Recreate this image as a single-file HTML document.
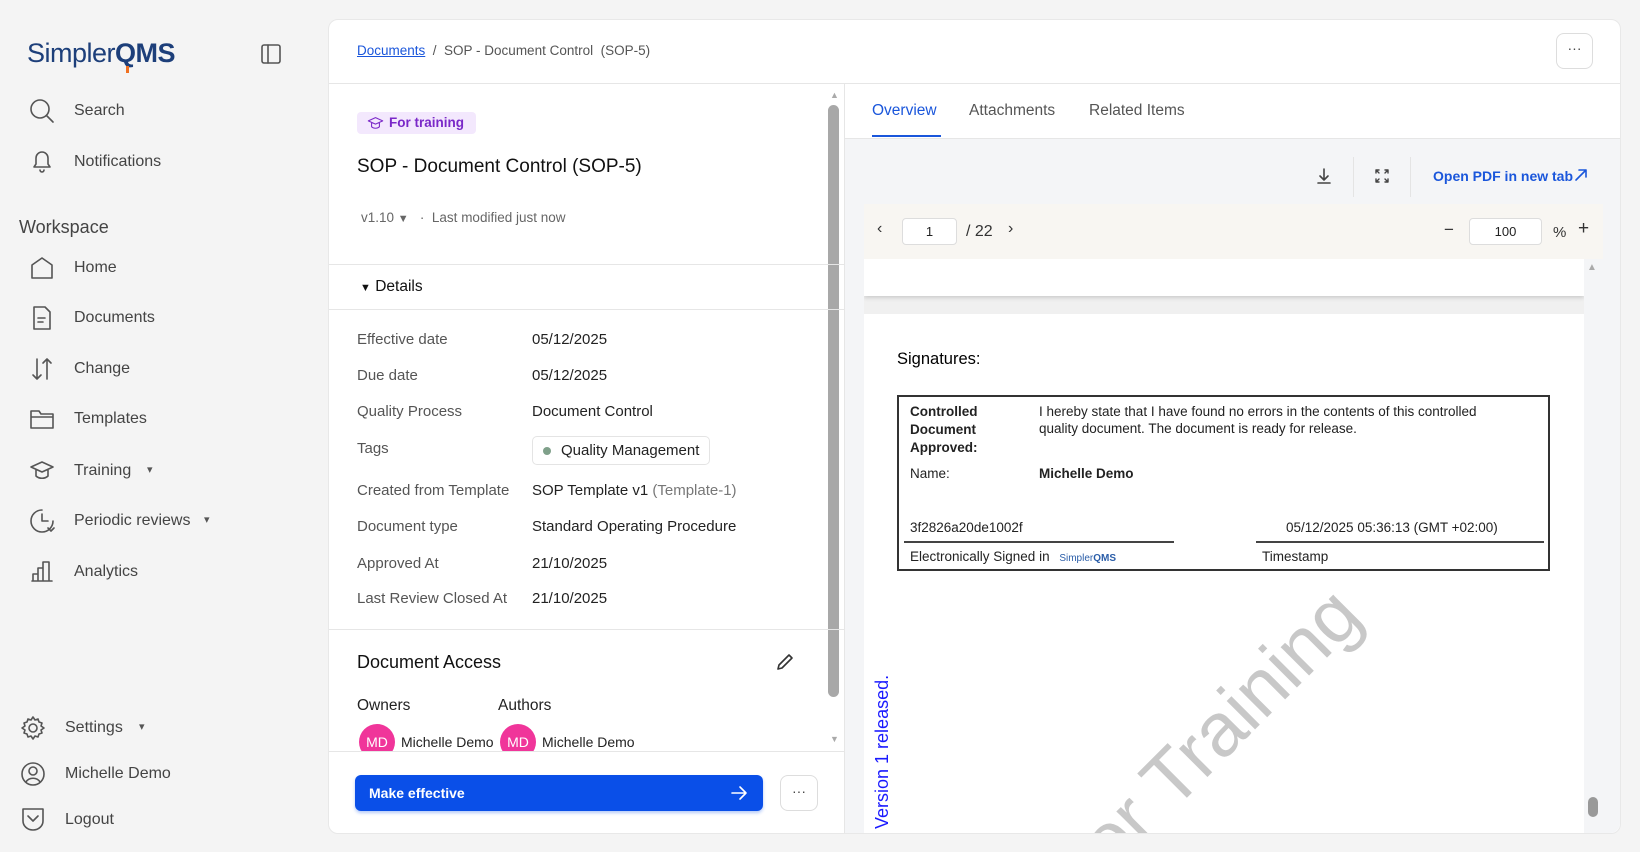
<!DOCTYPE html>
<html style="overflow:hidden"><head><meta charset="utf-8"><style>
*{box-sizing:border-box;margin:0;padding:0}
html,body{width:1640px;height:852px;overflow:hidden}
body{background:#f4f4f4;font-family:"Liberation Sans",sans-serif;position:relative;color:#222}
.a{position:absolute;white-space:nowrap}
.nav{font-size:16px;color:#444}
.ic{position:absolute;width:26px;height:26px;fill:none;stroke:#555;stroke-width:1.6;stroke-linecap:round;stroke-linejoin:round}
.lbl{font-size:15px;color:#555}
.val{font-size:15px;color:#222}
.hr{position:absolute;height:1px;background:#e6e6e6}
</style></head><body>
<!-- sidebar -->
<div class="a" style="left:27px;top:38px;font-size:27px;color:#1d3f7a;letter-spacing:-0.5px">Simpler<b style="color:#1d3f7a">QMS</b></div>
<div class="a" style="left:126px;top:66px;width:3px;height:7px;background:#f07020"></div>
<svg class="ic" style="left:260px;top:43px;width:22px;height:22px" viewBox="0 0 22 22"><rect x="2" y="2" width="18" height="18" rx="2"/><line x1="8" y1="2" x2="8" y2="20"/></svg>

<svg class="ic" style="left:29px;top:98px" viewBox="0 0 26 26"><circle cx="11" cy="11" r="9"/><line x1="18" y1="18" x2="24" y2="24"/></svg>
<div class="a nav" style="left:74px;top:102px">Search</div>
<svg class="ic" style="left:29px;top:148px" viewBox="0 0 26 26"><path d="M5 19h16l-2-3v-6a6 6 0 0 0-12 0v6z"/><path d="M11 22a2 2 0 0 0 4 0"/></svg>
<div class="a nav" style="left:74px;top:153px">Notifications</div>
<div class="a" style="left:19px;top:217px;font-size:18px;color:#444">Workspace</div>
<svg class="ic" style="left:29px;top:255px" viewBox="0 0 26 26"><path d="M3 10L13 3l10 7v13H3z"/></svg>
<div class="a nav" style="left:74px;top:259px">Home</div>
<svg class="ic" style="left:29px;top:305px" viewBox="0 0 26 26"><path d="M5 2h11l5 5v17H5z"/><line x1="9" y1="13" x2="16" y2="13"/><line x1="9" y1="17" x2="14" y2="17"/></svg>
<div class="a nav" style="left:74px;top:309px">Documents</div>
<svg class="ic" style="left:29px;top:356px" viewBox="0 0 26 26"><path d="M8 3v20M4 19l4 4 4-4M18 23V3M14 7l4-4 4 4"/></svg>
<div class="a nav" style="left:74px;top:360px">Change</div>
<svg class="ic" style="left:29px;top:406px" viewBox="0 0 26 26"><path d="M2 5h8l2 3h12v14H2z M2 11h22"/></svg>
<div class="a nav" style="left:74px;top:410px">Templates</div>
<svg class="ic" style="left:29px;top:458px" viewBox="0 0 26 26"><path d="M2 9l11-5 11 5-11 5z M7 12v6c3 3 9 3 12 0v-6"/></svg>
<div class="a nav" style="left:74px;top:462px">Training</div>
<div class="a" style="left:147px;top:463px;font-size:11px;color:#555">▾</div>
<svg class="ic" style="left:29px;top:508px" viewBox="0 0 26 26"><path d="M13 2a11 11 0 1 0 11 11"/><path d="M13 6v7h6M19 20l3 3 3-3"/></svg>
<div class="a nav" style="left:74px;top:512px">Periodic reviews</div>
<div class="a" style="left:204px;top:513px;font-size:11px;color:#555">▾</div>
<svg class="ic" style="left:29px;top:558px" viewBox="0 0 26 26"><path d="M3 23h20M4 23v-7h5v7M9 23V10h5v13M14 23V4h6v19"/></svg>
<div class="a nav" style="left:74px;top:563px">Analytics</div>
<svg class="ic" style="left:20px;top:715px" viewBox="0 0 26 26"><circle cx="13" cy="13" r="4"/><path d="M13 2l2 3 3-1 1 3 3 1-1 3 3 2-3 2 1 3-3 1-1 3-3-1-2 3-2-3-3 1-1-3-3-1 1-3-3-2 3-2-1-3 3-1 1-3 3 1z"/></svg>
<div class="a nav" style="left:65px;top:719px">Settings</div>
<div class="a" style="left:139px;top:720px;font-size:11px;color:#555">▾</div>
<svg class="ic" style="left:20px;top:761px" viewBox="0 0 26 26"><circle cx="13" cy="13" r="11"/><circle cx="13" cy="10" r="4"/><path d="M6 21c3-5 11-5 14 0"/></svg>
<div class="a nav" style="left:65px;top:765px">Michelle Demo</div>
<svg class="ic" style="left:20px;top:806px" viewBox="0 0 26 26"><path d="M3 3h20v12a10 9 0 0 1-20 0z"/><path d="M8 10l5 5 5-5"/></svg>
<div class="a nav" style="left:65px;top:811px">Logout</div>

<!-- card -->
<div class="a" style="left:328px;top:19px;width:1293px;height:815px;background:#fff;border:1px solid #e8e8e8;border-radius:10px"></div>
<div class="a" style="left:357px;top:43px;font-size:13.5px;color:#555"><span style="color:#1a56db;text-decoration:underline">Documents</span>&nbsp;&nbsp;/&nbsp;&nbsp;SOP - Document Control&nbsp;&nbsp;(SOP-5)</div>
<div class="a" style="left:1556px;top:33px;width:37px;height:36px;border:1px solid #ddd;border-radius:8px;text-align:center;line-height:28px;font-size:14px;color:#444">···</div>
<div class="hr" style="left:329px;top:83px;width:1291px"></div>

<!-- left panel -->
<div class="a" style="left:844px;top:84px;width:1px;height:749px;background:#e6e6e6"></div>
<div class="a" style="left:830px;top:90px;font-size:9px;color:#aaa">▲</div>
<div class="a" style="left:828px;top:105px;width:11px;height:592px;background:#a8a8a8;border-radius:6px"></div>
<div class="a" style="left:830px;top:734px;font-size:9px;color:#aaa">▼</div>
<div class="a" style="left:357px;top:112px;width:119px;height:22px;background:#f3e8fd;border-radius:4px;color:#7a28c8;font-size:13.5px;font-weight:bold;line-height:22px;padding-left:32px">For training</div>
<svg class="ic" style="left:367px;top:115px;width:17px;height:17px;stroke:#7a28c8" viewBox="0 0 26 26"><path d="M2 9l11-5 11 5-11 5z M7 12v6c3 3 9 3 12 0v-6"/></svg>
<div class="a" style="left:357px;top:156px;font-size:19px;color:#111">SOP - Document Control (SOP-5)</div>
<div class="a" style="left:361px;top:210px;font-size:13.5px;color:#666">v1.10 <span style="font-size:11px">▼</span>&nbsp;&nbsp;&nbsp;·&nbsp;&nbsp;Last modified just now</div>
<div class="hr" style="left:329px;top:264px;width:515px"></div>
<div class="a" style="left:360px;top:278px;font-size:15.5px;color:#111"><span style="font-size:11px">▼</span> Details</div>
<div class="hr" style="left:329px;top:309px;width:515px"></div>

<div class="a lbl" style="left:357px;top:331px">Effective date</div><div class="a val" style="left:532px;top:331px">05/12/2025</div>
<div class="a lbl" style="left:357px;top:367px">Due date</div><div class="a val" style="left:532px;top:367px">05/12/2025</div>
<div class="a lbl" style="left:357px;top:403px">Quality Process</div><div class="a val" style="left:532px;top:403px">Document Control</div>
<div class="a lbl" style="left:357px;top:440px">Tags</div>
<div class="a" style="left:532px;top:436px;width:178px;height:29px;border:1px solid #e4e4e4;border-radius:5px;font-size:15px;line-height:27px;padding-left:28px">Quality Management</div>
<div class="a" style="left:543px;top:447px;width:8px;height:8px;border-radius:50%;background:#7fa08a"></div>
<div class="a lbl" style="left:357px;top:482px">Created from Template</div><div class="a val" style="left:532px;top:482px">SOP Template v1 <span style="color:#777">(Template-1)</span></div>
<div class="a lbl" style="left:357px;top:518px">Document type</div><div class="a val" style="left:532px;top:518px">Standard Operating Procedure</div>
<div class="a lbl" style="left:357px;top:555px">Approved At</div><div class="a val" style="left:532px;top:555px">21/10/2025</div>
<div class="a lbl" style="left:357px;top:590px">Last Review Closed At</div><div class="a val" style="left:532px;top:590px">21/10/2025</div>
<div class="hr" style="left:329px;top:629px;width:515px"></div>
<div class="a" style="left:357px;top:652px;font-size:18px;color:#111">Document Access</div>
<svg class="ic" style="left:775px;top:652px;width:20px;height:20px;stroke:#333" viewBox="0 0 20 20"><path d="M3 17l1-4L14 3l3 3L7 16z"/></svg>
<div class="a" style="left:357px;top:697px;font-size:15.5px;color:#222">Owners</div>
<div class="a" style="left:498px;top:697px;font-size:15.5px;color:#222">Authors</div>
<div class="a" style="left:359px;top:724px;width:36px;height:36px;border-radius:50%;background:#f0359a;color:#fff;font-size:14px;text-align:center;line-height:36px">MD</div>
<div class="a" style="left:401px;top:734px;font-size:14px">Michelle Demo</div>
<div class="a" style="left:500px;top:724px;width:36px;height:36px;border-radius:50%;background:#f0359a;color:#fff;font-size:14px;text-align:center;line-height:36px">MD</div>
<div class="a" style="left:542px;top:734px;font-size:14px">Michelle Demo</div>
<div class="a" style="left:329px;top:751px;width:515px;height:82px;background:#fff;border-top:1px solid #e6e6e6;border-bottom-left-radius:10px"></div>
<div class="a" style="left:355px;top:775px;width:408px;height:36px;background:#0a4fe8;border-radius:6px;color:#fff;font-size:14px;font-weight:bold;line-height:36px;padding-left:14px;box-shadow:0 2px 3px rgba(10,79,232,.3)">Make effective</div>
<svg class="ic" style="left:730px;top:784px;width:18px;height:18px;stroke:#fff" viewBox="0 0 18 18"><path d="M2 9h14M10 3l6 6-6 6"/></svg>
<div class="a" style="left:780px;top:775px;width:38px;height:36px;border:1px solid #ddd;border-radius:8px;text-align:center;line-height:30px;font-size:14px;color:#444">···</div>

<!-- right panel -->
<div class="a" style="left:872px;top:102px;font-size:15.5px;color:#1a56db">Overview</div>
<div class="a" style="left:872px;top:135px;width:69px;height:2px;background:#1a56db"></div>
<div class="a" style="left:969px;top:102px;font-size:15.5px;color:#555">Attachments</div>
<div class="a" style="left:1089px;top:102px;font-size:15.5px;color:#555">Related Items</div>
<div class="a" style="left:845px;top:138px;width:775px;height:695px;background:#f4f5f7;border-top:1px solid #e6e6e6;border-bottom-right-radius:10px"></div>
<svg class="ic" style="left:1316px;top:167px;width:16px;height:18px;stroke:#444" viewBox="0 0 16 18"><path d="M8 2v11M4 9l4 4 4-4M2 16h12"/></svg>
<div class="a" style="left:1353px;top:157px;width:1px;height:40px;background:#e4e4e4"></div>
<svg class="ic" style="left:1374px;top:168px;width:16px;height:16px;stroke:#444;stroke-width:1.4" viewBox="0 0 16 16"><path d="M2 5V2h3M11 2h3v3M14 11v3h-3M5 14H2v-3M2 2l3 3M14 2l-3 3M14 14l-3-3M2 14l3-3"/></svg>
<div class="a" style="left:1410px;top:157px;width:1px;height:40px;background:#e4e4e4"></div>
<div class="a" style="left:1433px;top:168px;font-size:14px;font-weight:bold;color:#1a56db">Open PDF in new tab</div>
<svg class="ic" style="left:1574px;top:168px;width:14px;height:14px;stroke:#1a56db" viewBox="0 0 14 14"><path d="M2 12L12 2M5 2h7v7"/></svg>

<div class="a" style="left:864px;top:204px;width:739px;height:55px;background:#f8f6f2"></div>
<div class="a" style="left:877px;top:220px;font-size:16px;color:#333">‹</div>
<div class="a" style="left:902px;top:218px;width:55px;height:27px;background:#fff;border:1px solid #ddd;border-radius:4px;text-align:center;font-size:13px;line-height:25px">1</div>
<div class="a" style="left:966px;top:223px;font-size:16px;color:#333">/ 22</div>
<div class="a" style="left:1008px;top:220px;font-size:16px;color:#333">›</div>
<div class="a" style="left:1444px;top:220px;font-size:17px;color:#333">−</div>
<div class="a" style="left:1469px;top:218px;width:73px;height:27px;background:#fff;border:1px solid #ddd;border-radius:4px;text-align:center;font-size:13px;line-height:25px">100</div>
<div class="a" style="left:1553px;top:224px;font-size:15px;color:#333">%</div>
<div class="a" style="left:1578px;top:218px;font-size:19px;color:#333">+</div>

<div class="a" style="left:864px;top:259px;width:720px;height:574px;background:#f0f0f0;overflow:hidden">
  <div class="a" style="left:0;top:0;width:720px;height:37px;background:#fff;box-shadow:0 2px 4px rgba(0,0,0,.15)"></div>
  <div class="a" style="left:0;top:55px;width:720px;height:519px;background:#fff;overflow:hidden">
    <div class="a" style="left:33px;top:36px;font-size:16.5px;color:#000">Signatures:</div>
    <div class="a" style="left:33px;top:81px;width:653px;height:176px;border:2px solid #333">
      <div class="a" style="left:11px;top:6px;font-size:13.5px;font-weight:bold;line-height:18px">Controlled<br>Document<br>Approved:</div>
      <div class="a" style="left:140px;top:6px;font-size:13.5px;line-height:17px">I hereby state that I have found no errors in the contents of this controlled<br>quality document. The document is ready for release.</div>
      <div class="a" style="left:11px;top:69px;font-size:13.5px">Name:</div>
      <div class="a" style="left:140px;top:69px;font-size:13.5px;font-weight:bold">Michelle Demo</div>
      <div class="a" style="left:11px;top:123px;font-size:13.5px">3f2826a20de1002f</div>
      <div class="a" style="left:387px;top:123px;font-size:13.5px">05/12/2025 05:36:13 (GMT +02:00)</div>
      <div class="a" style="left:5px;top:144px;width:270px;height:2px;background:#444"></div>
      <div class="a" style="left:357px;top:144px;width:288px;height:2px;background:#444"></div>
      <div class="a" style="left:11px;top:152px;font-size:13.5px">Electronically Signed in <span style="font-size:10px;color:#2a5da8;margin-left:6px">Simpler<b>QMS</b></span></div>
      <div class="a" style="left:363px;top:152px;font-size:13.5px">Timestamp</div>
    </div>
    <div class="a" style="left:245px;top:500px;font-size:76px;color:#c8c8c8;transform:rotate(-45deg);transform-origin:left bottom">for Training</div>
    <div class="a" style="font-size:18px;color:#1a1aff;transform:rotate(-90deg);transform-origin:left top;top:515px;left:8px">Version 1 released.</div>
  </div>
</div>
<div class="a" style="left:1585px;top:259px;width:18px;height:574px;background:#f4f5f7"></div>
<div class="a" style="left:1587px;top:262px;font-size:10px;color:#aaa">▲</div>
<div class="a" style="left:1588px;top:797px;width:10px;height:20px;background:#999;border-radius:5px"></div>
</body></html>
